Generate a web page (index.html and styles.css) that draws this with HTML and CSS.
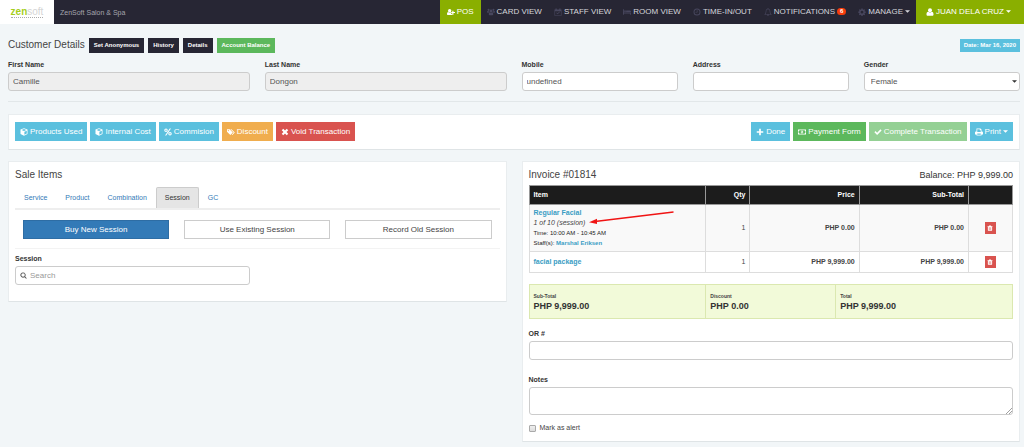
FILE: index.html
```html
<!DOCTYPE html>
<html lang="en">
<head>
<meta charset="utf-8">
<title>ZenSoft Salon &amp; Spa</title>
<link rel="stylesheet" href="styles.css">
</head>
<body>
<svg class="sprite" aria-hidden="true">
  <symbol id="user-plus" viewBox="0 0 18 16"><circle cx="6" cy="5" r="3.8"/><path d="M0 13c0-3 1-5 3-5 2 1.600 4 1.600 6 0v4h3v1c0 1-1 2-2 2H2c-1 0-2-1-2-2zM12 5h2.500v3H18v2.500h-3.500V14H12v-3.500H9.500V8H12z"/></symbol>
  <symbol id="users" viewBox="0 0 18 16"><circle cx="9" cy="5.500" r="3.200"/><circle cx="3.500" cy="3.200" r="2.300"/><circle cx="14.500" cy="3.200" r="2.300"/><path d="M4 13c0-3 1-4.500 2.500-4.500 1.500 1.300 3.500 1.300 5 0C13 8.500 14 10 14 13c0 1.500-1 2.500-2.500 2.500h-5C5 15.500 4 14.500 4 13zM0 8c0-1.500.5-2.500 1.500-2.500 1.200.8 2.500.8 3.500 0-.2 1 0 2 .5 2.500C4.500 8 4 9 3.500 9.500H1.500C.5 9.500 0 9 0 8zm18 0c0-1.500-.5-2.500-1.500-2.500-1.200.8-2.500.8-3.500 0 .2 1 0 2-.5 2.500 1 0 1.500 1 2 1.500h2c1 0 1.500-.5 1.500-1.500z"/></symbol>
  <symbol id="calendar" viewBox="0 0 16 16"><path fill-rule="evenodd" d="M1 3h2V1h2.500v2h5V1H13v2h2v12.500H1zm1.200 3.500v7.800h11.600V6.500z"/><path d="M4.500 9.800l1-1 1.700 1.700L11 7l1 1-4.800 4.600z"/></symbol>
  <symbol id="bed" viewBox="0 0 18 16"><path d="M0 2h2v7h16v5h-2v-2.500H2V14H0zm7 2.500h8c2 0 3 1 3 3.500H7z"/><circle cx="4.500" cy="6.200" r="1.900"/></symbol>
  <symbol id="clock" viewBox="0 0 16 16"><path fill-rule="evenodd" d="M8 1a7 7 0 1 1 0 14A7 7 0 0 1 8 1zm0 2a5 5 0 1 0 0 10A5 5 0 0 0 8 3z"/><path d="M7.500 4.500H9v4.700H5V8h2.500z"/></symbol>
  <symbol id="bell" viewBox="0 0 16 16"><path fill-rule="evenodd" d="M7.300 0h1.400v1.500C11 2 12.500 3.800 12.500 6c0 3.500 1 5 2.500 6.500v1h-5a2 2 0 0 1-4 0H1v-1C2.500 11 3.500 9.500 3.500 6c0-2.200 1.500-4 3.800-4.500zM8 2.500C6 2.500 4.700 4 4.700 6c0 3-.6 4.800-1.700 6.300h10C11.900 10.800 11.300 9 11.300 6 11.300 4 10 2.500 8 2.500z"/></symbol>
  <symbol id="gear" viewBox="0 0 16 16"><path fill-rule="evenodd" d="M6.800 1h2.400l.4 2 1.200.5 1.700-1.200 1.700 1.700L13 5.700l.5 1.200 2 .3v2.400l-2 .4-.5 1.200 1.200 1.700-1.700 1.700-1.700-1.200-1.200.5-.4 2H6.800l-.4-2-1.200-.5-1.700 1.200-1.700-1.700L3 11.200 2.500 10l-2-.4V7.200l2-.3L3 5.700 1.800 4l1.700-1.700 1.700 1.200L6.400 3zM8 5.600a2.800 2.800 0 1 0 0 5.600 2.800 2.800 0 0 0 0-5.600z"/></symbol>
  <symbol id="user" viewBox="0 0 14 16"><circle cx="7" cy="4.700" r="4"/><path d="M0 13c0-3.500 1-5.500 3.500-5.500 2 1.800 5 1.800 7 0C13 7.500 14 9.500 14 13c0 1.500-1 2.500-2.500 2.500h-9C1 15.500 0 14.500 0 13z"/></symbol>
  <symbol id="caret" viewBox="0 0 8 8"><path d="M0 2h8L4 6z"/></symbol>
  <symbol id="cube" viewBox="0 0 16 16"><path fill-rule="evenodd" d="M8 .5L15 3.200v9L8 15.700 1 12.200v-9zM8 2L3.200 4 8 5.900 12.800 4zm.8 5.300v6.200l4.800-2.400V5.400z"/></symbol>
  <symbol id="percent" viewBox="0 0 16 16"><path fill-rule="evenodd" d="M4 1a3.500 3.500 0 1 1 0 7 3.500 3.500 0 0 1 0-7zm0 2.200a1.300 1.300 0 1 0 0 2.600 1.300 1.300 0 0 0 0-2.600zM12 8a3.500 3.500 0 1 1 0 7 3.500 3.500 0 0 1 0-7zm0 2.200a1.300 1.300 0 1 0 0 2.600 1.300 1.300 0 0 0 0-2.600zM11.500 1H14L4.500 15H2z"/></symbol>
  <symbol id="tags" viewBox="0 0 18 16"><path fill-rule="evenodd" d="M0 2h6l7 7-5.500 6L0 7.500zm3 1.600a1.300 1.300 0 1 0 0 2.600 1.300 1.300 0 0 0 0-2.600z"/><path d="M7.500 2H10l7.500 7-5.500 6-1.500-1L15 9z"/></symbol>
  <symbol id="times" viewBox="0 0 16 16"><path d="M4.500 1.500L8 5l3.500-3.500 3 3L11 8l3.500 3.500-3 3L8 11l-3.500 3.500-3-3L5 8 1.500 4.500z"/></symbol>
  <symbol id="plus" viewBox="0 0 16 16"><path d="M6.300 1.500h3.400v4.800h4.800v3.400H9.700v4.800H6.300V9.700H1.500V6.300h4.800z"/></symbol>
  <symbol id="money" viewBox="0 0 20 16"><path fill-rule="evenodd" d="M0 2h20v12H0zm4 1.500L1.500 6v4L4 12.500h12l2.500-2.500V6L16 3.500z"/><path fill-rule="evenodd" d="M10 4c2 0 3 1.800 3 4s-1 4-3 4-3-1.800-3-4 1-4 3-4zm-.5 1.500L8.500 6.500v.8h1V10h-1v1h3v-1h-1V5.500z"/></symbol>
  <symbol id="check" viewBox="0 0 16 16"><path d="M.8 8.500L3 6.200l3.200 3.200L13 2.600l2.200 2.200-9 9z"/></symbol>
  <symbol id="print" viewBox="0 0 16 16"><path fill-rule="evenodd" d="M3 1h8l2 2v4h1c1 0 2 1 2 2v4h-3v2H3v-2H0V9c0-1 1-2 2-2h1zm1.500 1.500v5.300h7V4.500h-2v-2zm0 8.500v2.700h7V11z"/></symbol>
  <symbol id="search" viewBox="0 0 16 16"><path fill-rule="evenodd" d="M7 1a6 6 0 0 1 4.800 9.500l3.700 3.500-1.600 1.600-3.600-3.700A6 6 0 1 1 7 1zm0 2a4 4 0 1 0 0 8 4 4 0 0 0 0-8z"/></symbol>
  <symbol id="trash" viewBox="0 0 16 16"><path fill-rule="evenodd" d="M5.500 1h5l.8 2H15v1.500h-1.300V14c0 .8-.7 1.500-1.500 1.500H3.800c-.8 0-1.500-.7-1.500-1.500V4.500H1V3h3.700zM5 6v7h1V6zm2.500 0v7h1V6zM10 6v7h1V6z"/></symbol>
</svg>

<header class="navbar">
  <a class="logo" href="#" aria-label="zensoft home"><span class="logo-name"><b>zen</b>soft</span></a>
  <span class="company">ZenSoft Salon &amp; Spa</span>
  <nav class="menu">
    <a class="menu-item active" href="#"><svg class="icon"><use href="#user-plus"/></svg>POS</a>
    <a class="menu-item" href="#"><svg class="icon"><use href="#users"/></svg>CARD VIEW</a>
    <a class="menu-item" href="#"><svg class="icon"><use href="#calendar"/></svg>STAFF VIEW</a>
    <a class="menu-item" href="#"><svg class="icon"><use href="#bed"/></svg>ROOM VIEW</a>
    <a class="menu-item" href="#"><svg class="icon"><use href="#clock"/></svg>TIME-IN/OUT</a>
    <a class="menu-item" href="#"><svg class="icon"><use href="#bell"/></svg>NOTIFICATIONS<span class="count">6</span></a>
    <a class="menu-item" href="#"><svg class="icon"><use href="#gear"/></svg>MANAGE<svg class="caret"><use href="#caret"/></svg></a>
    <a class="menu-item account" href="#"><svg class="icon"><use href="#user"/></svg>JUAN DELA CRUZ<svg class="caret"><use href="#caret"/></svg></a>
  </nav>
</header>

<main class="page">
  <section class="customer">
    <div class="customer-bar">
      <h1 class="title">Customer Details</h1>
      <button class="tag dark">Set Anonymous</button>
      <button class="tag dark">History</button>
      <button class="tag dark">Details</button>
      <button class="tag green">Account Balance</button>
      <span class="date">Date: Mar 16, 2020</span>
    </div>
    <form class="customer-form">
      <div class="field wide"><label for="first">First Name</label><input class="control" id="first" value="Camille" disabled></div>
      <div class="field wide"><label for="last">Last Name</label><input class="control" id="last" value="Dongon" disabled></div>
      <div class="field"><label for="mobile">Mobile</label><input class="control" id="mobile" value="undefined"></div>
      <div class="field"><label for="address">Address</label><input class="control" id="address"></div>
      <div class="field"><label for="gender">Gender</label>
        <div class="select-box"><select class="control" id="gender"><option>Female</option><option>Male</option></select><svg class="select-arrow"><use href="#caret"/></svg></div>
      </div>
    </form>
  </section>

  <section class="card toolbar">
    <button class="btn blue"><svg class="icon"><use href="#cube"/></svg>Products Used</button>
    <button class="btn blue"><svg class="icon"><use href="#cube"/></svg>Internal Cost</button>
    <button class="btn blue"><svg class="icon"><use href="#percent"/></svg>Commision</button>
    <button class="btn orange"><svg class="icon"><use href="#tags"/></svg>Discount</button>
    <button class="btn red"><svg class="icon"><use href="#times"/></svg>Void Transaction</button>
    <button class="btn blue push"><svg class="icon"><use href="#plus"/></svg>Done</button>
    <button class="btn green"><svg class="icon"><use href="#money"/></svg>Payment Form</button>
    <button class="btn green" disabled><svg class="icon"><use href="#check"/></svg>Complete Transaction</button>
    <button class="btn blue"><svg class="icon"><use href="#print"/></svg>Print<svg class="caret"><use href="#caret"/></svg></button>
  </section>

  <div class="columns">
    <section class="card">
      <h2 class="title">Sale Items</h2>
      <nav class="tabs">
        <a class="tab" href="#">Service</a>
        <a class="tab" href="#">Product</a>
        <a class="tab" href="#">Combination</a>
        <a class="tab current" href="#">Session</a>
        <a class="tab" href="#">GC</a>
      </nav>
      <div class="choices">
        <button class="choice chosen">Buy New Session</button>
        <button class="choice">Use Existing Session</button>
        <button class="choice">Record Old Session</button>
      </div>
      <div class="field session">
        <label for="session">Session</label>
        <div class="search"><svg class="icon"><use href="#search"/></svg><input class="control" id="session" placeholder="Search"></div>
      </div>
    </section>

    <section class="card invoice">
      <div class="invoice-bar">
        <h2 class="title">Invoice #01814</h2>
        <span class="balance">Balance: PHP 9,999.00</span>
      </div>
      <table class="items">
        <thead><tr><th class="col-item">Item</th><th class="col-qty">Qty</th><th class="col-money">Price</th><th class="col-money">Sub-Total</th><th class="col-act"></th></tr></thead>
        <tbody>
          <tr class="shaded">
            <td><a href="#">Regular Facial</a>
              <div class="session-line"><i>1 of 10 (session)</i><svg class="arrow" viewBox="0 0 86 14"><path d="M84.500 2L8 11.300" fill="none" stroke="#f01414" stroke-width="1.500"/><path d="M0 12.300L8 8.700v5.300z" fill="#f01414"/></svg></div>
              <div class="detail">Time: 10:00 AM - 10:45 AM</div>
              <div class="detail">Staff(s): <a href="#">Marshal Eriksen</a></div></td>
            <td class="qty">1</td><td class="money">PHP 0.00</td><td class="money">PHP 0.00</td>
            <td class="act"><button class="remove" aria-label="Remove"><svg class="icon"><use href="#trash"/></svg></button></td>
          </tr>
          <tr>
            <td><a href="#">facial package</a></td>
            <td class="qty">1</td><td class="money">PHP 9,999.00</td><td class="money">PHP 9,999.00</td>
            <td class="act"><button class="remove" aria-label="Remove"><svg class="icon"><use href="#trash"/></svg></button></td>
          </tr>
        </tbody>
      </table>
      <dl class="totals">
        <div class="total"><dt>Sub-Total</dt><dd>PHP 9,999.00</dd></div>
        <div class="total"><dt>Discount</dt><dd>PHP 0.00</dd></div>
        <div class="total"><dt>Total</dt><dd>PHP 9,999.00</dd></div>
      </dl>
      <div class="field receipt"><label for="receipt">OR #</label><input class="control" id="receipt"></div>
      <div class="field"><label for="notes">Notes</label>
        <div class="notes-box"><textarea class="control notes" id="notes"></textarea><svg class="grip" viewBox="0 0 6 6"><path d="M0 6l6-6M3 6l3-3" stroke="#888" stroke-width="0.800"/></svg></div>
      </div>
      <label class="alert"><input type="checkbox" class="tick">Mark as alert</label>
    </section>
  </div>
</main>
</body>
</html>
```
FILE: styles.css
```css
* { box-sizing: border-box; }
body {
  margin: 0;
  min-height: 100vh;
  background: #f2f6f8;
  color: #444;
  font: 7px/10px "Liberation Sans", Arial, sans-serif;
}
a { color: #3a9dc4; text-decoration: none; }
button, input, select, textarea { font: inherit; color: inherit; margin: 0; }
h1, h2, dl, dd { margin: 0; }
.sprite { display: none; }
.icon { width: 8px; height: 8px; fill: currentColor; flex: none; }
.caret { width: 5px; height: 5px; fill: currentColor; flex: none; }

.navbar { display: flex; height: 24px; background: #272634; color: #a5a5ad; }
.logo { display: flex; width: 54px; background: #fff; align-items: center; justify-content: center; }
.logo-name { border-bottom: 1px dotted #aaa; color: #d5d5d5; font-size: 10px; line-height: 10px; }
.logo-name b { color: #a5ce1c; }
.company { padding-left: 6px; font-size: 7px; line-height: 25px; }
.menu { display: flex; margin-left: auto; }
.menu-item {
  display: flex; align-items: center; gap: 2px; padding: 0 6px 1px;
  color: #d6d6dc; font-size: 8px; white-space: nowrap;
}
.menu-item .icon { color: #48475e; }
.menu-item.active, .menu-item.account { background: #8aaf00; color: #fff; }
.menu-item.active { padding-left: 7px; padding-right: 7px; }
.menu-item.active .icon, .menu-item.account .icon { color: #fff; }
.menu-item.account { padding-left: 10px; padding-right: 13px; }
.count {
  padding: 0 3px; border-radius: 4px; background: #f73c0c; color: #fff;
  font-size: 6px; font-weight: bold; line-height: 7px;
}

.page { padding: 13px 4px 5px 8px; }
.title { color: #444; font-size: 10px; font-weight: normal; line-height: 12px; }
.customer { padding-bottom: 10px; border-bottom: 1px solid #e2e7e9; }
.customer-bar { display: flex; align-items: center; gap: 4px; height: 16px; }
.tag, .date { padding: 0 5px; border: 0; color: #fff; font-size: 6px; font-weight: bold; line-height: 15px; }
.date { margin-left: auto; background: #5bc0de; line-height: 13px; padding: 0 4px; }
.dark { background: #272634; }
.green { background: #5cb85c; }
.customer-form { display: grid; grid-template-columns: repeat(12, 1fr); gap: 15px; margin-top: 7px; }
.field { grid-column: span 2; display: flex; flex-direction: column; gap: 2px; min-width: 0; }
.field.wide { grid-column: span 3; }
.field label { color: #333; font-weight: bold; }
.control {
  display: block; width: 100%; height: 19px; padding: 0 4px; border: 1px solid #ccc;
  border-radius: 3px; background: #fff; color: #555; font-size: 8px; outline: 0;
}
.control:disabled { background: #eee; }
.control::placeholder { color: #999; opacity: 1; }
.select-box, .notes-box { position: relative; }
.select-box .control { appearance: none; padding-left: 6px; }
.select-arrow { position: absolute; right: 3px; top: 7px; width: 5px; height: 5px; fill: #333; }

.card { padding: 7px 6px; border: 1px solid #e9edef; border-bottom-color: #dfe4e6; background: #fff; }
.toolbar { display: flex; gap: 3px; margin-top: 12px; padding-bottom: 8px; }
.btn {
  display: flex; align-items: center; gap: 2px; height: 19px; padding: 0 5px;
  border: 0; color: #fff; font-size: 8px; white-space: nowrap;
}
.btn:disabled { opacity: 0.65; }
.blue { background: #5bc0de; }
.orange { background: #f0ad4e; }
.red { background: #d9534f; }
.push { margin-left: auto; }

.columns { display: grid; grid-template-columns: 1fr 1fr; align-items: start; gap: 15px; margin-top: 11px; }
.tabs { display: flex; margin-top: 6px; border-bottom: 2px solid #eee; }
.tab { padding: 0 8px; border: 1px solid transparent; border-bottom: 0; color: #337ab7; line-height: 20px; }
.tab.current { border-color: #ccc; border-radius: 2px 2px 0 0; background: #e5e5e5; color: #333; }
.choices { display: grid; grid-template-columns: repeat(3, 1fr); gap: 15px; padding: 10px 8px 9px; border-bottom: 1px solid #f3f3f3; }
.choice { height: 19px; padding: 0; border: 1px solid #ccc; background: #fff; color: #444; font-size: 8px; }
.choice.chosen { border-color: #2e6da4; background: #337ab7; color: #fff; }
.session { width: 48.5%; padding: 5px 0 9px; }
.search { position: relative; }
.search .icon { position: absolute; left: 5px; top: 6px; width: 7px; height: 7px; color: #555; }
.search .control { padding-left: 14px; }

.invoice-bar { display: flex; justify-content: space-between; }
.balance { color: #333; font-size: 9px; line-height: 12px; }
.items { width: 100%; margin-top: 4px; border-collapse: collapse; table-layout: fixed; }
.items th { height: 19px; padding: 0 4px; border: 1px solid #999; background: #1c1c1c; color: #fff; text-align: right; }
.items .col-item { width: 36.6%; text-align: left; }
.col-qty, .col-act { width: 9.1%; }
.col-money { width: 22.6%; }
.items td { height: 21px; padding: 3px 4px; border: 1px solid #ddd; }
.items td a { font-weight: bold; }
.items .shaded { background: #f9f9f9; }
.items .qty, .items .money { text-align: right; }
.items .money { font-weight: bold; }
.items .act { padding: 0; text-align: center; }
.session-line { position: relative; width: max-content; }
.arrow { position: absolute; left: 100%; top: -8px; width: 86px; height: 14px; margin-left: 4px; }
.detail { color: #222; font-size: 6px; }
.remove { display: inline-flex; align-items: center; justify-content: center; width: 11px; height: 12px; padding: 0; border: 0; background: #d9534f; color: #fff; vertical-align: middle; }
.remove .icon { width: 6px; height: 6px; }
.totals { display: grid; grid-template-columns: 176fr 130fr 177fr; margin-top: 11px; border: 1px solid #dbe8b0; background: #f2fad9; }
.total { padding: 6px 4px; }
.total + .total { border-left: 1px solid #dbe8b0; }
.total dt { font-size: 5px; font-weight: bold; line-height: 10px; }
.total dd { color: #333; font-size: 9px; font-weight: bold; line-height: 11px; }
.receipt { margin: 10px 0 15px; }
.notes { height: 28px; resize: none; }
.grip { position: absolute; right: 1px; bottom: 1px; width: 6px; height: 6px; }
.alert { display: flex; align-items: center; gap: 4px; margin: 8px 0 1px; }
.tick { appearance: none; width: 7px; height: 7px; border: 1px solid #aaa; border-radius: 1px; background: linear-gradient(#eee, #ddd); }
```
